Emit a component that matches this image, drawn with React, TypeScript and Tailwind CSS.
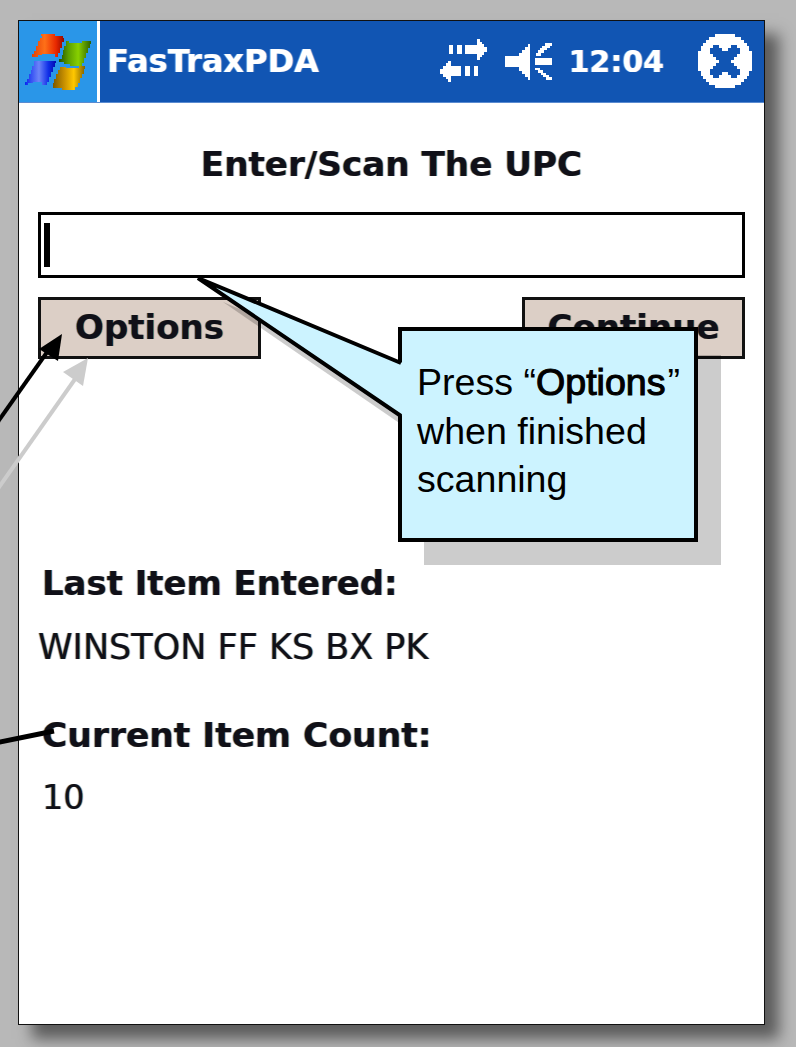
import React from 'react';

const PDA_FONT = "font-['Tahoma','DejaVu_Sans',sans-serif]";

const FlagLogo = () => (
  <svg width="76" height="66" viewBox="0 0 76 66" shapeRendering="crispEdges">
    <defs>
      <linearGradient id="flagRed" x1="0" x2="1" y1="0" y2="0">
        <stop offset="0" stopColor="#e04008" />
        <stop offset="0.4" stopColor="#ff7018" />
        <stop offset="0.75" stopColor="#e82800" />
        <stop offset="1" stopColor="#900800" />
      </linearGradient>
      <linearGradient id="flagGreen" x1="0" x2="1" y1="0" y2="0">
        <stop offset="0" stopColor="#245000" />
        <stop offset="0.3" stopColor="#5ca000" />
        <stop offset="0.6" stopColor="#88d000" />
        <stop offset="1" stopColor="#2c6000" />
      </linearGradient>
      <linearGradient id="flagBlue" x1="0" x2="1" y1="0" y2="0">
        <stop offset="0" stopColor="#0828f0" />
        <stop offset="0.45" stopColor="#6c84f8" />
        <stop offset="0.75" stopColor="#1030e8" />
        <stop offset="1" stopColor="#0008b0" />
      </linearGradient>
      <linearGradient id="flagYellow" x1="0" x2="1" y1="0" y2="0">
        <stop offset="0" stopColor="#7c5800" />
        <stop offset="0.35" stopColor="#c89000" />
        <stop offset="0.65" stopColor="#ffc800" />
        <stop offset="1" stopColor="#806000" />
      </linearGradient>
    </defs>
    <path fill="url(#flagRed)" d="M21 5h14v2h8v2h1v4h-2v6h-2v5h-2v4h-3v-3H22v1h-4v2h-6v-3h2v-3h2v-5h2v-5h2V9h2z" />
    <path fill="url(#flagGreen)" d="M46 12h3v2h13v-2h9v3h-1v4h-2v5h-2v5h-2v5h-2v3H50v-2h-6v-2h-5v-3h3v-4h1v-5h1v-4h2z" />
    <path fill="url(#flagBlue)" d="M14 32h22v2h-1v4h-2v5h-2v5h-2v5h-2v3h-5v-3H13v1H8v2H5v-3h2v-3h2v-5h2v-4h1v-4h2z" />
    <path fill="url(#flagYellow)" d="M40 38h6v1h13v-2h6v3h-1v5h-2v4h-2v5h-2v4h-3v3H42v-2h-9v-5h1v-4h2v-5h2v-4h2z" />
  </svg>
);

const SyncArrows = () => (
  <svg width="47" height="44" viewBox="0 0 47 44" shapeRendering="crispEdges" fill="#fff">
    <path d="M9 6h4v9H9zM17 6h5v9h-5zM25 6h12V0h3v3h2v2h2v3h3v5h-3v3h-2v2h-2v3h-3v-6H25z" />
    <path d="M25 27h5v10h-5zM34 27h4v10h-4zM21 27H11v-5H8v2H6v3H3v3H0v5h3v3h3v2h2v3h3v-6h10z" />
  </svg>
);

const Speaker = () => (
  <svg width="48" height="38" viewBox="0 0 48 38" shapeRendering="crispEdges" fill="#fff">
    <path d="M0 14h14V11h3V8h3V5h3V2h2v36h-2v-3h-3v-3h-3v-3h-3v-4H0z" />
    <path d="M30 16h17v7H30zM40 1h7v3h-2v2h-3v2h-3v3h-3v3h-5v-3h2V8h2V6h2V4h3z" />
    <path d="M30 26h5v2h3v3h3v2h3v2h3v3h-6v-3h-3v-2h-2v-2h-3v-3h-3z" />
  </svg>
);

const CloseBadge = () => (
  <svg width="54" height="54" viewBox="0 0 54 54" shapeRendering="crispEdges">
    <path
      fill="#fff"
      d="M17 0h20v3h6v3h3v3h3v3h2v5h3v20h-3v5h-2v3h-3v3h-3v3h-6v3H17v-3h-6v-3H8v-3H5v-3H3v-5H0V17h3v-5h2V9h3V6h3V3h6z"
    />
    <path
      fill="#1155b3"
      d="M12 14h3v-3h6v3h3v3h6v-3h3v-3h6v3h3v6h-3v3h-3v3h-3v3h3v3h3v3h3v6h-3v3h-6v-3h-3v-3h-6v3h-3v3h-6v-3h-3v-6h3v-3h3v-3h3v-3h-3v-3h-3v-3h-3z"
    />
  </svg>
);

const PdaButton = ({ label }: { label: string }) => (
  <div className="w-[223px] h-[62px] border-[3px] border-[#111] bg-[#dccfc6] flex items-center justify-center pb-[1px] text-[34px] font-bold text-[#101018] [text-shadow:1px_0_rgba(190,110,0,0.45),-1px_0_rgba(0,110,190,0.45)]">
    {label}
  </div>
);

// Annotation layers that sit over the device screenshot
const CalloutShadow = () => (
  <>
    <div className="absolute left-[424px] top-[355px] w-[297px] h-[210px] bg-black/20" />
    <svg className="absolute left-0 top-0" width="796" height="1047">
      <polygon points="223,302 424,386 424,440" fill="#000" fillOpacity="0.2" />
    </svg>
  </>
);

const Callout = () => (
  <>
    <div className="absolute left-[398px] top-[327px] w-[300px] h-[215px] border-4 border-black bg-[#ccf3ff] pl-[15px] pt-[27px] font-['Liberation_Sans',sans-serif] text-[37.6px] leading-[48.5px] text-black">
      Press “<span className="mr-[2px] [-webkit-text-stroke:1.1px_black]">Options</span>”
      <br />
      when finished
      <br />
      scanning
    </div>
    <svg className="absolute left-0 top-0" width="796" height="1047">
      <polygon points="198,278 403,363 403,416" fill="#ccf3ff" />
      <polyline points="401,363 198,278 401,416" fill="none" stroke="#000" strokeWidth="4" />
      <line x1="-10" y1="500" x2="80" y2="372" stroke="#ccc" strokeWidth="4" />
      <polygon points="88,358 63,372 83,386" fill="#ccc" />
      <line x1="-10" y1="433" x2="50" y2="348" stroke="#000" strokeWidth="4" />
      <polygon points="62,334 39,349 58,361" fill="#000" />
      <line x1="-10" y1="744" x2="54" y2="731" stroke="#000" strokeWidth="5" />
    </svg>
  </>
);

export default function App() {
  return (
    <div className="relative w-[796px] h-[1047px] overflow-hidden bg-[#b8b8b8] pl-[18px] pt-[20px]">
      <div
        className={`w-[747px] h-[1005px] border border-[#111] bg-white flex flex-col shadow-[14px_14px_14px_rgba(0,0,0,0.5)] ${PDA_FONT}`}
      >
        <div className="h-[82px] shrink-0 flex items-center bg-[#1155b3] border-b border-[#5a8bd0] text-white">
          <div className="w-[81px] h-full bg-[#2a96e8] border-r-[3px] border-white flex items-center pl-[1px]">
            <FlagLogo />
          </div>
          <div className="ml-[7px] text-[32px] font-bold -mt-[1px] [text-shadow:1px_0_rgba(120,220,255,0.5),-1px_0_rgba(255,200,220,0.4)]">
            FasTraxPDA
          </div>
          <div className="ml-auto mr-[18px] w-[47px] -mt-[1px]">
            <SyncArrows />
          </div>
          <div className="mr-[16px] -mt-[2px]">
            <Speaker />
          </div>
          <div className="mr-[34px] text-[30px] font-bold -mt-[1px] [text-shadow:1px_0_rgba(120,220,255,0.5),-1px_0_rgba(255,200,220,0.4)]">
            12:04
          </div>
          <div className="mr-[12px] -mt-[2px]">
            <CloseBadge />
          </div>
        </div>

        <div className="flex-1 flex flex-col px-[19px] text-[#101018]">
          <h1 className="mt-[37px] h-[48px] text-center text-[34.2px] font-bold leading-[48px] [text-shadow:1px_0_rgba(190,110,0,0.45),-1px_0_rgba(0,110,190,0.45)]">
            Enter/Scan The UPC
          </h1>
          <div className="mt-[24px] h-[66px] border-[3px] border-black bg-white flex items-center pl-[3px]">
            <div className="w-[6px] h-[44px] bg-black" />
          </div>
          <div className="mt-[19px] flex justify-between">
            <PdaButton label="Options" />
            <PdaButton label="Continue" />
          </div>
          <div className="mt-[201px] ml-[4px] h-[48px] text-[33.9px] font-bold leading-[48px] [text-shadow:1px_0_rgba(190,110,0,0.45),-1px_0_rgba(0,110,190,0.45)]">
            Last Item Entered:
          </div>
          <div className="mt-[15px] h-[48px] text-[35px] leading-[48px] [text-shadow:1px_0_rgba(190,110,0,0.45),-1px_0_rgba(0,110,190,0.45)]">
            WINSTON FF KS BX PK
          </div>
          <div className="mt-[40px] ml-[4px] h-[48px] text-[34.5px] font-bold leading-[48px] [text-shadow:1px_0_rgba(190,110,0,0.45),-1px_0_rgba(0,110,190,0.45)]">
            Current Item Count:
          </div>
          <div className="mt-[15px] ml-[4px] h-[48px] text-[33.5px] leading-[48px] [text-shadow:1px_0_rgba(190,110,0,0.45),-1px_0_rgba(0,110,190,0.45)]">
            10
          </div>
        </div>
      </div>

      <CalloutShadow />
      <Callout />
    </div>
  );
}
